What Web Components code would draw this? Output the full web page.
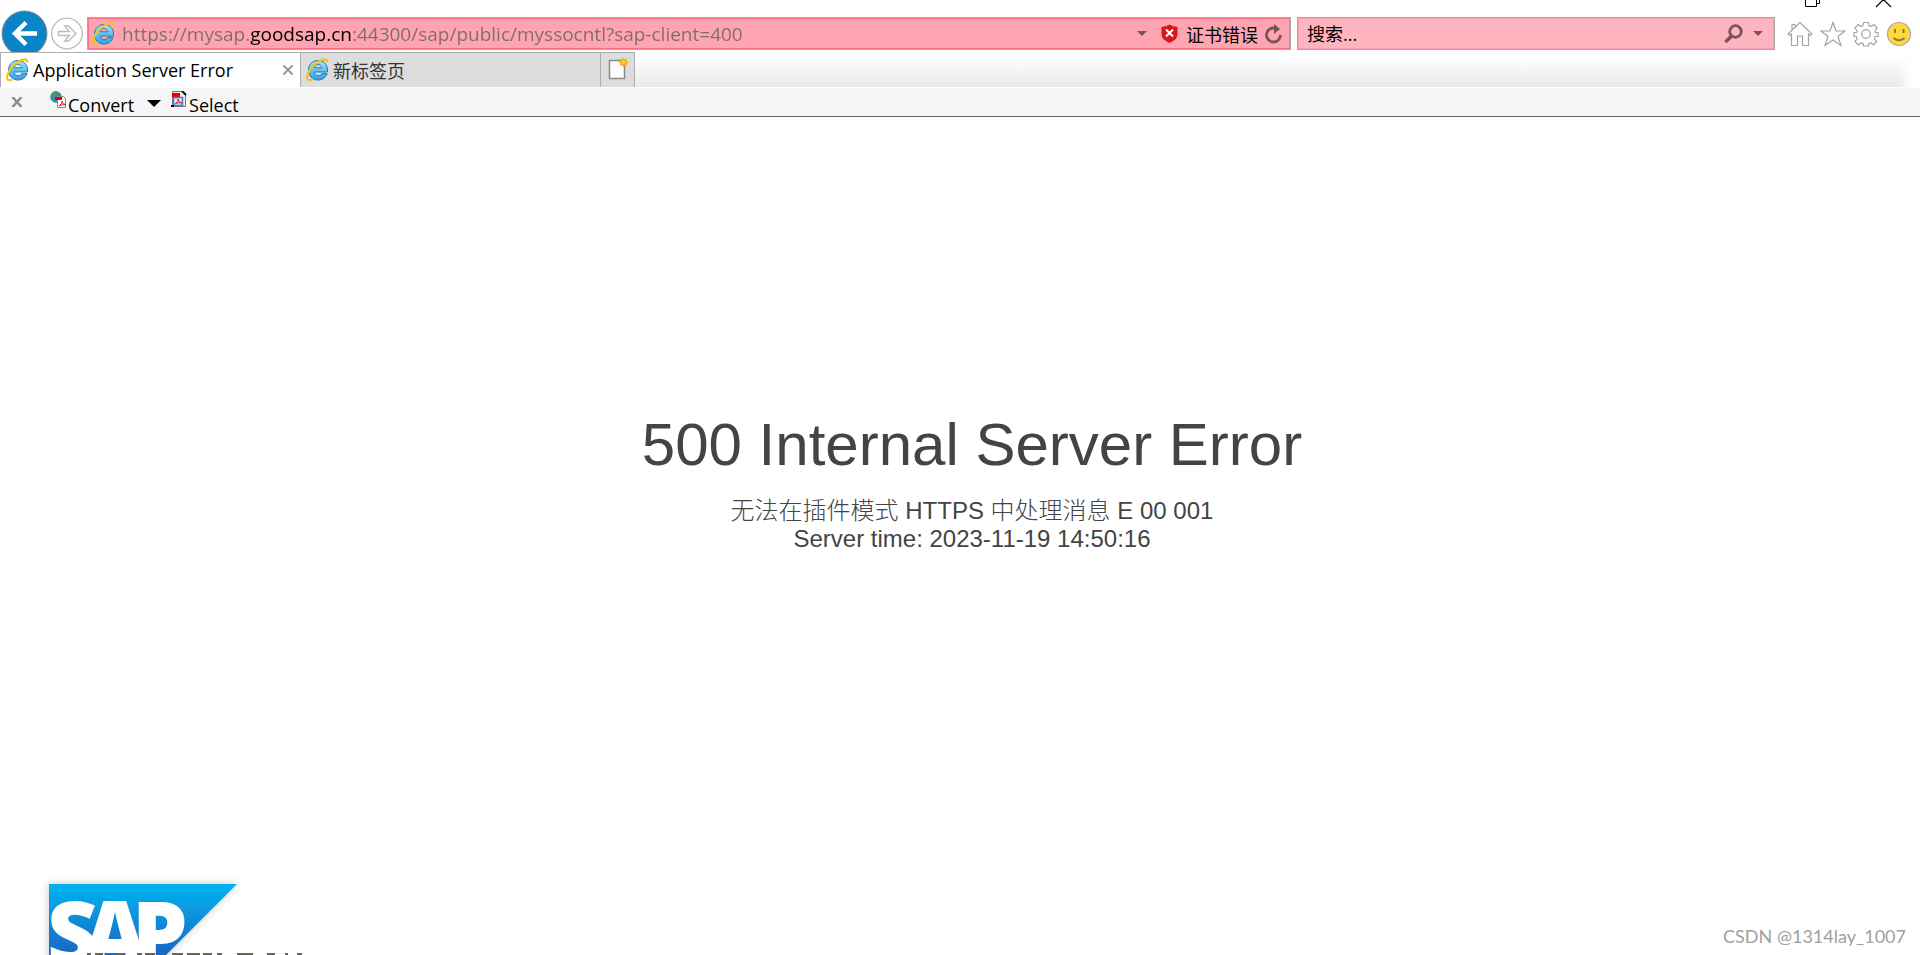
<!DOCTYPE html>
<html lang="zh-CN">
<head>
<meta charset="utf-8">
<title>Application Server Error</title>
<style>
html, body { height: 100%; }
body { margin: 0; background: #fff; overflow: hidden; font-family: "Open Sans", "Noto Sans CJK SC", sans-serif; font-size: 18px; color: #000; }
</style>
</head>
<body>
<browser-window></browser-window>
<script>
function define(name, html, connected) {
  const t = document.createElement('template');
  t.innerHTML = '<style>*{box-sizing:border-box}button{font:inherit;color:inherit;background:none;border:0;padding:0;margin:0}input{font:inherit;margin:0;padding:0;border:0;background:none;outline:0}svg{display:block}</style>' + html;
  customElements.define(name, class extends HTMLElement {
    constructor() {
      super();
      this.attachShadow({ mode: 'open' }).append(t.content.cloneNode(true));
    }
    connectedCallback() {
      if (connected) connected(this.shadowRoot);
    }
  });
}

define('ie-icon', `
<style>:host{display:block;flex:none}</style>
<svg width="23" height="24" viewBox="0 0 23 24">
  <defs><linearGradient id="b" x1="0" y1="0" x2="0" y2="1"><stop offset="0" stop-color="#a5e6fb"/><stop offset=".5" stop-color="#5cc4f0"/><stop offset="1" stop-color="#3a9ee0"/></linearGradient></defs>
  <path d="M12 2.500c5.500 0 9.500 4 9.500 9.500v2H8.200c.4 2.300 1.900 3.500 4 3.500 1.700 0 2.900-.6 3.600-1.900h5.200c-1.200 4-4.500 6.400-8.900 6.400C6.500 22 2.500 18 2.500 12.200c0-5.700 4-9.700 9.500-9.700zm0 4.100c-2 0-3.400 1.200-3.800 3.200h7.600c-.3-2-1.700-3.200-3.800-3.200z" fill="url(#b)" stroke="#2478b8" stroke-width="1"/>
  <path d="M21.300 4.500C21.600.6 17.500.4 12.500 3.500 7 7 2.500 12.500 1.200 17.800c-.8 3.700 1.200 5.400 5 3.700" fill="none" stroke="#f8c11d" stroke-width="2.200"/>
</svg>`);

define('window-controls', `
<style>:host{display:flex;justify-content:flex-end;height:9px;overflow:hidden;padding-right:28px;gap:53px}button{height:8px}</style>
<button aria-label="还原"><svg width="17" height="8" fill="none" stroke="#000"><path d="M.5-3V6.500h11V-3M11.500 3.500h3V-3"/></svg></button>
<button aria-label="关闭"><svg width="17" height="8" fill="none" stroke="#000" stroke-width="1.200"><path d="M1 7L8.500-.5 16 7"/></svg></button>`);

define('nav-buttons', `
<style>:host{display:flex;flex:none;height:43px;overflow:hidden;gap:3px;padding-left:1px}button{height:47px}</style>
<button aria-label="后退"><svg width="47" height="47"><circle cx="23.500" cy="24.500" r="22.500" fill="#0a84c6" stroke="#8b8b8b"/><path d="M36 24.500H14M25 13.500L14 24.500 25 35.500" fill="none" stroke="#fff" stroke-width="4.500"/></svg></button>
<button aria-label="前进"><svg width="34" height="47" fill="none" stroke="#bbb" stroke-width="1.300"><circle cx="16" cy="24.500" r="15.300"/><path d="M7.500 22.500h11l-5-5.500h4l7.500 7.500-7.500 7.500h-4l5-5.500h-11z"/></svg></button>`);

define('address-bar', `
<style>
:host{display:flex;align-items:center;flex:1;min-width:0;height:33px;border:1px solid #aaa8a8;background:#ffa5b1;box-shadow:inset 0 0 0 1px #ff7085;padding:0 7px 0 4px}
input{flex:1;min-width:0;height:29px;margin-left:7px;font-size:19px;-webkit-text-fill-color:transparent;color:#806b6f;background:linear-gradient(90deg,#806b6f 0 var(--from),#000 var(--from) var(--to),#806b6f var(--to));background-clip:text;-webkit-background-clip:text}
button{display:flex;align-items:center}
.cert{gap:8px;margin:0 7px 0 14px}
</style>
<ie-icon></ie-icon>
<input aria-label="地址" value="https://mysap.goodsap.cn:44300/sap/public/myssocntl?sap-client=400">
<button aria-label="显示地址栏自动完成"><svg width="10" height="6"><path d="M0 0h10L5 5z" fill="#7c5259"/></svg></button>
<button class="cert"><svg width="17" height="19"><path d="M8.500 .5l3 1.500 5 1V10c0 5-4 7-8 9-4-2-8-4-8-9V3l5-1z" fill="#d9161f"/><path d="M5 5.500l7 7M12 5.500l-7 7" stroke="#fff" stroke-width="2"/></svg>证书错误</button>
<button aria-label="刷新"><svg width="18" height="20" fill="none" stroke="#7c5259" stroke-width="2.800"><path d="M10.500 4.300A7 7 0 1 0 15.500 11"/><path d="M9 0l6 5-6 5z" fill="#7c5259" stroke="none"/></svg></button>`,
root => {
  // The host name is shown in black, the rest of the address in grey.
  const input = root.querySelector('input');
  const ctx = document.createElement('canvas').getContext('2d');
  ctx.font = getComputedStyle(input).font;
  const start = input.value.indexOf('goodsap');
  const end = input.value.indexOf(':', start);
  input.style.setProperty('--from', Math.round(ctx.measureText(input.value.slice(0, start)).width) + 'px');
  input.style.setProperty('--to', Math.round(ctx.measureText(input.value.slice(0, end)).width) + 'px');
});

define('search-box', `
<style>
:host{display:flex;align-items:center;flex:0 1 478px;min-width:0;height:33px;border:1px solid #aaa8a8;background:#ffb5c0;box-shadow:inset 0 0 0 1px #f8a0ae;padding:0 11px 0 9px;gap:10px}
input{flex:1;min-width:0;height:29px}input::placeholder{color:#000;opacity:1}
</style>
<input aria-label="搜索" placeholder="搜索...">
<button aria-label="搜索"><svg width="19" height="20" fill="none" stroke="#7c5259"><circle cx="11.500" cy="7.500" r="5.800" stroke-width="2.800"/><path d="M7.500 12L1.500 18" stroke-width="3.500"/></svg></button>
<button aria-label="搜索选项"><svg width="10" height="6"><path d="M0 0h10L5 5z" fill="#7c5259"/></svg></button>`);

define('command-icons', `
<style>:host{display:flex;flex:none;gap:7px;padding:0 8px 0 12px;align-items:center}</style>
<button aria-label="主页"><svg width="26" height="26" fill="none" stroke="#a3a3a3" stroke-width="1.200"><path d="M1 13L13 1.500 25 13l-1.500 1.500-2-1.500v11.500h-6V15h-5v9.500h-6V13l-2 1.500zM5 9V3.500h3v3"/></svg></button>
<button aria-label="收藏夹"><svg width="26" height="26" fill="none" stroke="#a3a3a3" stroke-width="1.200"><path d="M13 1.500l3 8.500h9l-7 5.500 3 9-8-5.500-8 5.500 3-9L1 10h9z"/></svg></button>
<button aria-label="工具"><svg width="26" height="26" viewBox="-13 -13 26 26" fill="none" stroke="#a3a3a3" stroke-width="1.200"><path d="M-2.500-11.500h5l.5 3 2 1 3-2L11-6 9-3l.5 1.500H12v4H9L8.500 5l2 2.500L7.500 11 5 9 2.500 10v2h-5v-2L-5 9l-2.500 2L-11 7.500-9 5-9.500 2.500H-12v-4h2.500L-9-3l-2-3 3-3.500 3 2 2-1z"/><circle r="4.300"/></svg></button>
<button aria-label="发送笑脸"><svg width="26" height="26"><circle cx="13" cy="13" r="11.500" fill="#ffd83d" stroke="#a5a5a5" stroke-width="1.200"/><path d="M9 8v4M17.500 8v4M7.500 17q5.500 4.500 11 0" fill="none" stroke="#907b35" stroke-width="2"/></svg></button>`);

define('tab-item', `
<style>
:host{display:flex;align-items:center;flex:none;width:300px;height:35px;border:solid #adadad;border-width:1px 0 0 1px;background:#ddd;color:#333;padding:0 7px 0 5px;gap:4px}
:host([selected]){background:#fff;color:#000}
.label{flex:1;text-align:left;white-space:nowrap}
.close{display:none}:host([selected]) .close{display:block}
</style>
<ie-icon></ie-icon><button class="label" role="tab"><slot></slot></button>
<button class="close" aria-label="关闭选项卡"><svg width="10" height="10" stroke="#999" stroke-width="2"><path d="M.5.500l9 9M9.500.500l-9 9"/></svg></button>`);

define('tab-strip', `
<style>
:host{display:flex;height:35px}
.new{width:35px;height:35px;border:1px solid #adadad;border-bottom:0;background:#ddd;padding:0 0 3px 7px}
.rest{flex:1;margin-right:8px;background:linear-gradient(90deg,transparent calc(100% - 14px),#fff),linear-gradient(#fff 10%,#eaeaea)}
</style>
<tab-item selected>Application Server Error</tab-item>
<tab-item>新标签页</tab-item>
<button class="new" aria-label="新建选项卡"><svg width="21" height="24"><path d="M1.500 3.500h15v18h-15z" fill="#fff" stroke="#888" stroke-width="1.500"/><path d="M15.500 0l1.200 2.400 2.500-1-.9 2.600L21 5l-2.500 1.200 1 2.500-2.600-.8L15.500 10.500l-1.200-2.600-2.600.8 1-2.500L10 5l2.700-1-1-2.600 2.600 1z" fill="#f8a817"/><circle cx="15.500" cy="5" r="2" fill="#ffd21e"/></svg></button>
<div class="rest"></div>`);

define('pdf-toolbar', `
<style>
:host{display:flex;align-items:center;height:29px;margin-top:1px;background:#f6f6f6;border-bottom:1px solid #666;padding-left:11px}
button{display:flex;align-items:center}.convert{margin-left:27px}.more{margin:4px 10px 0 13px}.convert svg,.select svg{margin-bottom:6px}.label{padding-top:5px}
</style>
<button aria-label="关闭工具栏"><svg width="12" height="10" stroke="#8d8d8d" stroke-width="2.500"><path d="M1.500 0l9 10M10.500 0l-9 10"/></svg></button>
<button class="convert"><svg width="18" height="17"><circle cx="6" cy="6" r="5.800" fill="#3e83c4"/><path d="M1 4q4-6 6-3L5 5 3 9zM8 2l3 2-2 4z" fill="#43a047"/><path d="M7.500 5.500h6l2 2.500v8.500h-8z" fill="#fff" stroke="#888"/><path d="M5 6h7v3H5z" fill="#e00"/><path d="M9 15q4-3 3-5 0 3 4 4-4-1-7 1" fill="none" stroke="#d22"/></svg><span class="label">Convert</span></button>
<button class="more" aria-label="更多转换选项"><svg width="14" height="8"><path d="M0 0h14L7 7z"/></svg></button>
<button class="select"><svg width="18" height="17"><path d="M1.500.500h10l3 3v12h-13z" fill="#eee" stroke="#777"/><path d="M11 0l4 4" stroke="#000" stroke-width="2"/><path d="M1 2h8v4H1z" fill="#e00"/><path d="M2.500 6.500h9v8h-9z" fill="#dbe7ff" stroke="#4a76c8" stroke-width="1.500"/><path d="M4 13q4-2 3-5 0 3 4 4-4-1-7 1" fill="none" stroke="#d22"/><path d="M0 14h3v2H0z"/></svg><span class="label">Select</span></button>`);

define('error-page', `
<style>
:host{display:flex;flex-direction:column;flex:1;min-height:0;overflow:hidden;padding:0 24px 0 48px;color:#444;font-family:"Liberation Sans","Noto Sans CJK SC",sans-serif}
.message{text-align:center;padding-top:294px;flex:none}
h1{font-size:60px;line-height:68px;font-weight:400;margin:0 0 18px}
p{font-size:24px;line-height:28px;margin:0;font-weight:300}
footer{margin:auto -24px 0 -12px;height:84px;flex:none;display:flex;justify-content:space-between;align-items:flex-end;padding-right:14px}
.mark{font-family:"Open Sans",sans-serif;font-weight:800}
.credit{font-family:Lato,sans-serif;font-size:18px;line-height:24px;padding-bottom:7px;color:#a0a0a0}
</style>
<div class="message"><h1>500 Internal Server Error</h1><p>无法在插件模式 HTTPS 中处理消息 E 00 001</p><p>Server time: 2023-11-19 14:50:16</p></div>
<footer>
<svg width="300" height="84" role="img" aria-label="SAP">
<defs><linearGradient id="g" x1="0" y1="0" x2="0" y2="1"><stop offset="0" stop-color="#00b4f0"/><stop offset=".75" stop-color="#1a67c2"/><stop offset="1" stop-color="#1e5fbb"/></linearGradient><filter id="s" x="-20%" y="-20%" width="140%" height="140%"><feDropShadow dx="0" dy="0" stdDeviation="5" flood-opacity=".22"/></filter></defs>
<path d="M13 13h188l-94 94H13z" fill="url(#g)" filter="url(#s)"/>
<text class="mark" x="11 47 96" y="94" font-size="88" fill="#fff">SAP</text>
<path d="M51 83h4M59 83h8M82 83h5M101 83h5M109 83h10M136 83h11M151 83h13M167 83h9M181 83h5M201 83h16M231 83h8M249 83h3M261 83h5" stroke="#69655c" stroke-width="2"/>
</svg>
<span class="credit">CSDN @1314lay_1007</span>
</footer>`);

define('browser-window', `
<style>
:host{display:flex;flex-direction:column;height:100%}
.bar{display:flex;height:43px}.fields{display:flex;flex:1;min-width:0;gap:6px;padding:8px 0 0 2px}
.bar command-icons{height:50px}
</style>
<window-controls></window-controls>
<div class="bar"><nav-buttons></nav-buttons><div class="fields"><address-bar></address-bar><search-box></search-box></div><command-icons></command-icons></div>
<tab-strip></tab-strip>
<pdf-toolbar></pdf-toolbar>
<error-page></error-page>`);
</script>
</body>
</html>
